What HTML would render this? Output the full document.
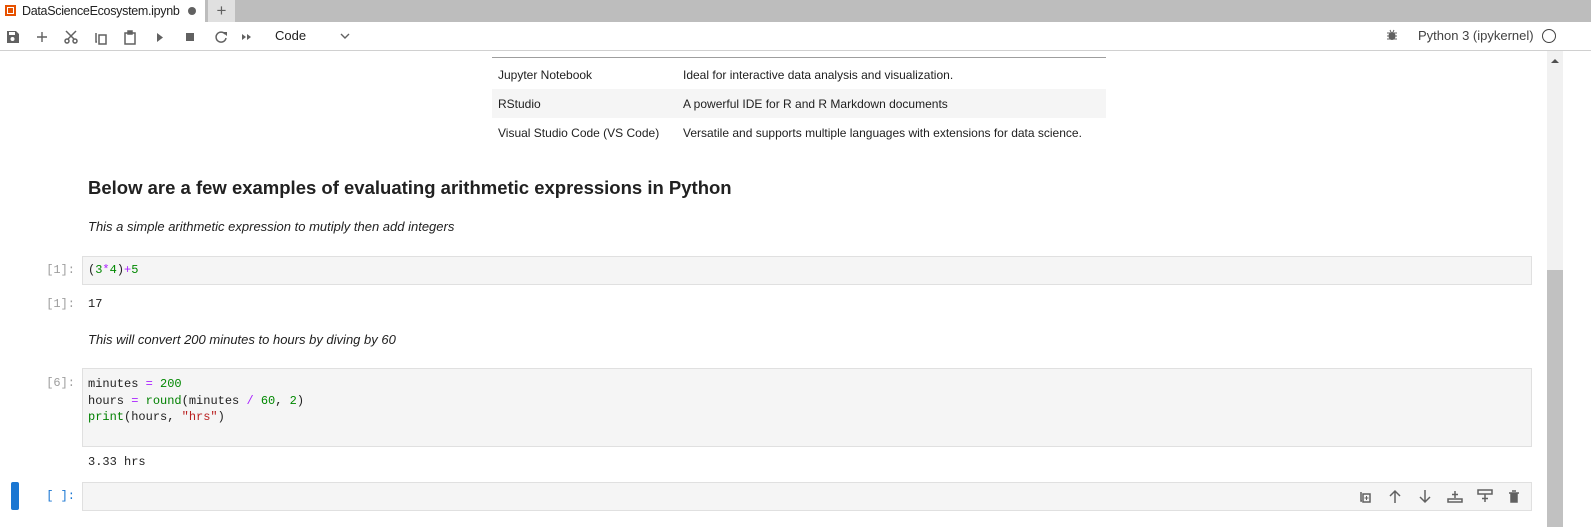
<!DOCTYPE html>
<html><head><meta charset="utf-8"><style>
*{margin:0;padding:0;box-sizing:border-box}
body{width:1591px;height:527px;overflow:hidden;background:#fff;position:relative;font-family:"Liberation Sans",sans-serif;color:#212121}
.a{position:absolute}
.mono{font-family:"Liberation Mono",monospace;font-size:12px}
.pr{color:#9e9e9e;text-align:right;width:70px;left:5px}
.box{background:#f5f5f5;border:1px solid #e0e0e0;left:82px;width:1450px}
.k{color:#008000}.o{color:#aa22ff}.n{color:#080}.s{color:#ba2121}
td{font-size:12px;height:29px;padding:0 6px;color:#212121}
</style></head><body>
<div class="a" style="left:0;top:0;width:1591px;height:22px;background:#bdbdbd"></div>
<div class="a" style="left:0;top:0;width:205px;height:23px;background:#fff"></div>
<div class="a" style="left:5px;top:5px;width:11px;height:11px;border:2px solid #e65100;background:#fff"><div style="margin:1px;width:5px;height:5px;background:#e65100"></div></div>
<div class="a" style="left:22px;top:4px;font-size:12.5px;letter-spacing:-0.3px">DataScienceEcosystem.ipynb</div>
<div class="a" style="left:188px;top:7px;width:8px;height:8px;border-radius:50%;background:#616161"></div>
<div class="a" style="left:208px;top:0;width:27px;height:22px;background:#e0e0e0;color:#616161;font-size:17px;text-align:center;line-height:21px">+</div>
<div class="a" style="left:0;top:50px;width:1591px;height:1px;background:#d0d0d0"></div>
<svg class="a" style="left:0;top:22px" width="360" height="28" fill="#616161">
<path d="M7 9h9l3 3v9h-12z M9 10v3h6v-3z" /><circle cx="12.5" cy="17" r="2" fill="#fff"/>
<path d="M42 10v10M37 15h10" stroke="#616161" stroke-width="1.4"/>
<g stroke="#616161" stroke-width="1.5" fill="none"><circle cx="67" cy="19" r="2"/><circle cx="75" cy="19" r="2"/><path d="M68 17l8-8M74 17l-8-8"/></g>
<g stroke="#616161" stroke-width="1.5" fill="none"><path d="M96 11v9h1"/><rect x="99" y="13" width="7" height="9"/></g>
<g stroke="#616161" stroke-width="1.5" fill="none"><rect x="125" y="11" width="10" height="11"/><rect x="128" y="9" width="4" height="3" fill="#616161"/></g>
<path d="M157 11l6 4.5-6 4.5z"/>
<rect x="186" y="11" width="8" height="8"/>
<path d="M225 12a5 5 0 1 0 1 4" stroke="#616161" stroke-width="1.5" fill="none"/><path d="M222 10l5 0 0 4z"/>
<path d="M242 12l4 3-4 3zM247 12l4 3-4 3z"/>
<path d="M341 12l4 4 4-4" stroke="#616161" stroke-width="1.4" fill="none"/>
</svg>
<div class="a" style="left:275px;top:28px;font-size:13px">Code</div>
<svg class="a" style="left:1386px;top:29px" width="12" height="12" fill="#616161"><ellipse cx="6" cy="7" rx="3.5" ry="4"/><path d="M1 4h10M1 7h10M1 10h10M4 1l1 2M8 1l-1 2" stroke="#616161"/></svg>
<div class="a" style="left:1418px;top:28px;font-size:13px;color:#424242">Python 3 (ipykernel)</div>
<div class="a" style="left:1542px;top:29px;width:14px;height:14px;border:1.5px solid #424242;border-radius:50%"></div>
<div class="a" style="left:1547px;top:51px;width:16px;height:476px;background:#f1f1f1"></div>
<div class="a" style="left:1547px;top:270px;width:16px;height:257px;background:#c1c1c1"></div>
<div class="a" style="left:1551px;top:59px;width:0;height:0;border:4px solid transparent;border-bottom-color:#505050;border-top:0"></div>
<div class="a" style="left:492px;top:57px;width:614px;height:1px;background:#9e9e9e"></div>
<table class="a" style="left:492px;top:60px;width:614px;border-collapse:collapse">
<tr><td style="width:185px">Jupyter Notebook</td><td>Ideal for interactive data analysis and visualization.</td></tr>
<tr style="background:#f5f5f5"><td>RStudio</td><td>A powerful IDE for R and R Markdown documents</td></tr>
<tr><td>Visual Studio Code (VS Code)</td><td>Versatile and supports multiple languages with extensions for data science.</td></tr>
</table>
<div class="a" style="left:88px;top:177px;font-size:18.5px;font-weight:bold;color:#212121">Below are a few examples of evaluating arithmetic expressions in Python</div>
<div class="a" style="left:88px;top:219px;font-size:13px;font-style:italic">This a simple arithmetic expression to mutiply then add integers</div>
<div class="a mono pr" style="top:263px">[1]:</div>
<div class="a box" style="top:256px;height:29px"></div>
<div class="a mono" style="left:88px;top:263px">(<span class="n">3</span><span class="o">*</span><span class="n">4</span>)<span class="o">+</span><span class="n">5</span></div>
<div class="a mono pr" style="top:297px">[1]:</div>
<div class="a mono" style="left:88px;top:297px">17</div>
<div class="a" style="left:88px;top:332px;font-size:13px;font-style:italic">This will convert 200 minutes to hours by diving by 60</div>
<div class="a mono pr" style="top:376px">[6]:</div>
<div class="a box" style="top:368px;height:79px"></div>
<div class="a mono" style="left:88px;top:376px;line-height:16.5px">minutes <span class="o">=</span> <span class="n">200</span><br>hours <span class="o">=</span> <span class="k">round</span>(minutes <span class="o">/</span> <span class="n">60</span>, <span class="n">2</span>)<br><span class="k">print</span>(hours, <span class="s">"hrs"</span>)</div>
<div class="a mono" style="left:88px;top:455px">3.33 hrs</div>
<div class="a" style="left:11px;top:482px;width:8px;height:28px;background:#1976d2;border-radius:2px"></div>
<div class="a mono pr" style="top:489px;color:#1976d2">[ ]:</div>
<div class="a box" style="top:482px;height:29px"></div>
<svg class="a" style="left:1355px;top:487px" width="170" height="18" fill="none" stroke="#616161" stroke-width="1.5">
<path d="M6 5v9h1"/><rect x="8" y="7" width="7" height="8"/><path d="M11.5 9v4M9.5 11h4" stroke-width="1"/>
<path d="M40 16V4M35 9l5-5 5 5"/>
<path d="M70 3v12M65 10l5 5 5-5"/>
<path d="M100 4v7M97 7.5h6"/><rect x="93" y="12" width="14" height="3"/>
<rect x="123" y="3" width="14" height="4"/><path d="M130 7v8M127 11.5h6"/>
<path d="M154 6h10M156 6v9h6v-9M157 4h4" fill="#616161"/>
</svg>
</body></html>
